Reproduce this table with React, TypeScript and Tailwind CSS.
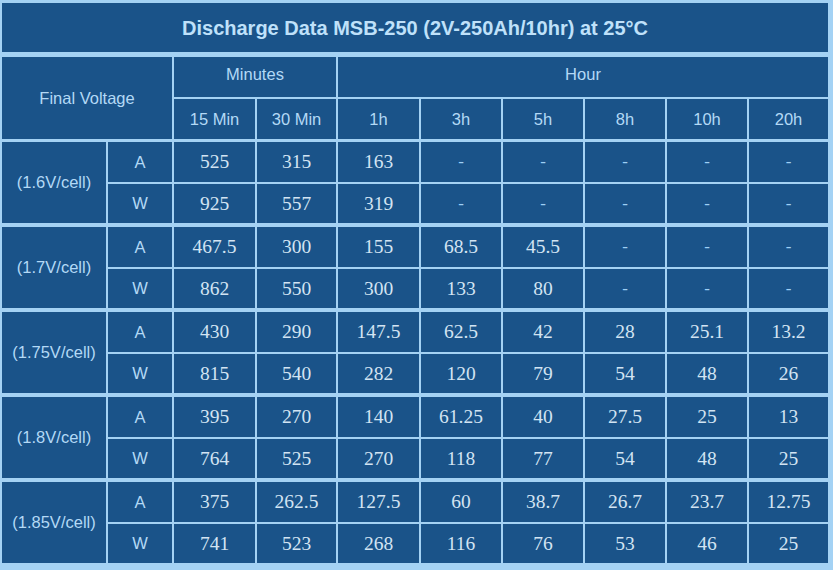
import React from 'react';

const cols = [
  { label: '15 Min', w: 'w-[81px]' },
  { label: '30 Min', w: 'w-[79px]' },
  { label: '1h', w: 'w-[81px]' },
  { label: '3h', w: 'w-[80px]' },
  { label: '5h', w: 'w-[80px]' },
  { label: '8h', w: 'w-[80px]' },
  { label: '10h', w: 'w-[80px]' },
  { label: '20h', w: 'w-[79px]' },
];

const groups = [
  { v: '(1.6V/cell)', a: ['525', '315', '163', '-', '-', '-', '-', '-'], w: ['925', '557', '319', '-', '-', '-', '-', '-'] },
  { v: '(1.7V/cell)', a: ['467.5', '300', '155', '68.5', '45.5', '-', '-', '-'], w: ['862', '550', '300', '133', '80', '-', '-', '-'] },
  { v: '(1.75V/cell)', a: ['430', '290', '147.5', '62.5', '42', '28', '25.1', '13.2'], w: ['815', '540', '282', '120', '79', '54', '48', '26'] },
  { v: '(1.8V/cell)', a: ['395', '270', '140', '61.25', '40', '27.5', '25', '13'], w: ['764', '525', '270', '118', '77', '54', '48', '25'] },
  { v: '(1.85V/cell)', a: ['375', '262.5', '127.5', '60', '38.7', '26.7', '23.7', '12.75'], w: ['741', '523', '268', '116', '76', '53', '46', '25'] },
];

const cell = 'bg-[#1a5389] flex items-center justify-center';
const sans = "font-['Liberation_Sans',Arial,sans-serif] text-[16.5px] text-[#b3d9f6]";
const serif = "font-['Liberation_Serif','Times_New_Roman',serif] text-[19.5px] text-[#d3e4f3]";

function DataRow({ unit, values, h }: { unit: string; values: string[]; h: string }) {
  return (
    <div className={`flex gap-[2px] ${h}`}>
      <div className={`${cell} w-[64px] ${sans}`}>{unit}</div>
      {values.map((v, i) => (
        <div key={i} className={`${cell} ${cols[i].w} ${serif}`}>
          {v === '-' ? <span className="text-[#9fd0f4] text-[17px]">-</span> : v}
        </div>
      ))}
    </div>
  );
}

export default function App() {
  return (
    <div className="w-[833px] h-[570px] bg-[#a4d2f4] pt-[3px] pl-[2px] pr-[5px] flex flex-col">
      <div className={`${cell} h-[49px] font-['Liberation_Sans',Arial,sans-serif] font-bold text-[20px] text-[#bfe1fa]`}>
        Discharge Data MSB-250 (2V-250Ah/10hr) at 25°C
      </div>

      {/* header */}
      <div className="flex gap-[2px] mt-[5px] h-[82px]">
        <div className={`${cell} w-[170px] ${sans}`}>Final Voltage</div>
        <div className="flex flex-col gap-[2px]">
          <div className={`${cell} h-[40px] ${sans} pb-[5px]`}>Minutes</div>
          <div className="flex gap-[2px] h-[40px]">
            {cols.slice(0, 2).map(c => (
              <div key={c.label} className={`${cell} ${c.w} ${sans}`}>{c.label}</div>
            ))}
          </div>
        </div>
        <div className="flex flex-col gap-[2px]">
          <div className={`${cell} h-[40px] ${sans} pb-[5px]`}>Hour</div>
          <div className="flex gap-[2px] h-[40px]">
            {cols.slice(2).map(c => (
              <div key={c.label} className={`${cell} ${c.w} ${sans}`}>{c.label}</div>
            ))}
          </div>
        </div>
      </div>

      {/* body */}
      <div className="flex flex-col gap-[4px] mt-[3px]">
        {groups.map(g => (
          <div key={g.v} className="flex gap-[2px] h-[81px]">
            <div className={`${cell} w-[104px] ${sans}`}>{g.v}</div>
            <div className="flex flex-col gap-[2px]">
              <DataRow unit="A" values={g.a} h="h-[40px]" />
              <DataRow unit="W" values={g.w} h="h-[39px]" />
            </div>
          </div>
        ))}
      </div>
    </div>
  );
}
